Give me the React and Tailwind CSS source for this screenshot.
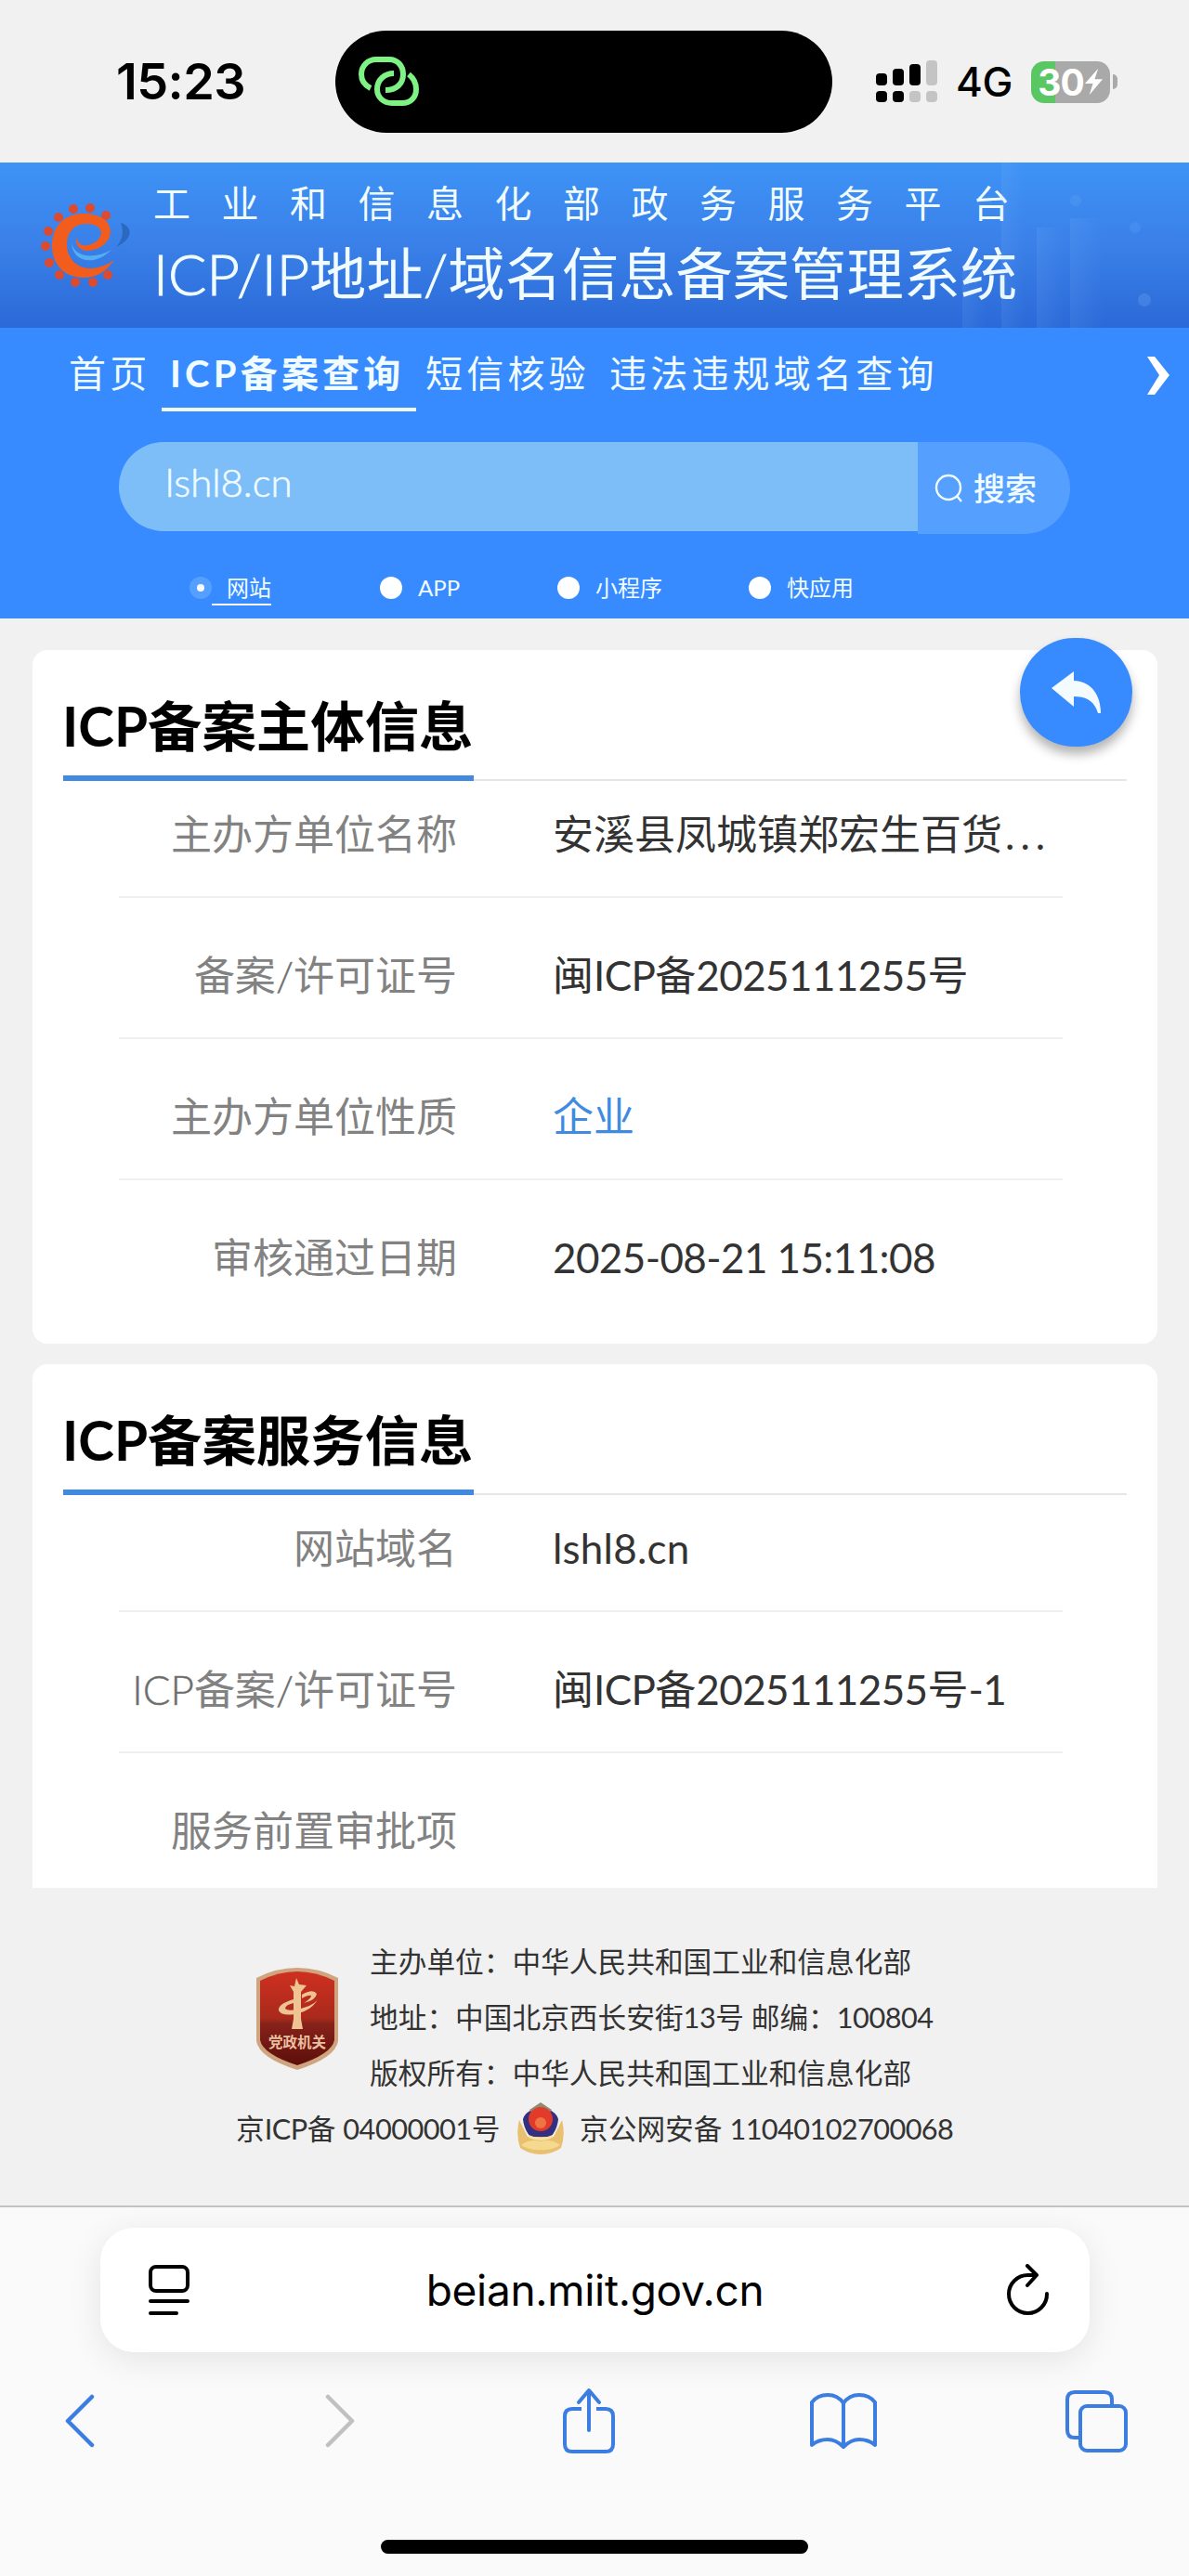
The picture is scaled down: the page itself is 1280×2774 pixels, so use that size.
import clsx from "clsx";

const subjectRows = [
  { label: "主办方单位名称", value: "安溪县凤城镇郑宏生百货..." },
  { label: "备案/许可证号", value: "闽ICP备2025111255号" },
  { label: "主办方单位性质", value: "企业", link: true },
  { label: "审核通过日期", value: "2025-08-21 15:11:08" },
];

const serviceRows = [
  { label: "网站域名", value: "lshl8.cn" },
  { label: "ICP备案/许可证号", value: "闽ICP备2025111255号-1" },
  { label: "服务前置审批项", value: "" },
];

function Mixed({ text, latin }) {
  return text.split(/([\x21-\x7e][\x20-\x7e]*)/).map((part, i) => {
    if (!part) return null;
    if (part === "...") {
      return (
        <span key={i} className="ml-[3px] tracking-[6px]">
          {part}
        </span>
      );
    }
    return i % 2 ? (
      <span key={i} className={latin}>
        {part}
      </span>
    ) : (
      part
    );
  });
}

function StatusBar() {
  return (
    <div className="flex h-[175px] items-start bg-[#f1f1f1] pt-[33px] font-['Inter','Noto_Sans_CJK_SC',sans-serif]">
      <div className="ml-[125px] flex h-[110px] w-[236px] items-center">
        <span className="text-[54px] font-semibold leading-none tracking-[-0.6px] text-black">15:23</span>
      </div>
      <div className="flex h-[110px] w-[535px] items-center rounded-full bg-black pl-[24px]">
        <svg width="70" height="56" viewBox="0 0 70 56" fill="none" stroke="#7ef283" strokeWidth="6">
          <path d="M14 35C8 32 4 27 4 20C4 11 11 4 20 4H34C43 4 49 11 49 20C49 30 42 37 30 37" />
          <path d="M39 19C29 19 21 26 21 36C21 45 28 51 37 51H48C57 51 63 45 63 36C63 29 60 24 55 20" />
        </svg>
      </div>
      <div className="ml-[47px] flex h-[110px] items-center">
        <svg width="66" height="46" viewBox="0 0 66 46">
          <rect x="0" y="14" width="12" height="13" rx="4" />
          <rect x="18" y="9" width="12" height="18" rx="4" />
          <rect x="36" y="4" width="12" height="23" rx="4" />
          <rect x="54" y="0" width="12" height="27" rx="4" fill="#c4c4c4" />
          <rect x="0" y="33" width="12" height="12" rx="4" />
          <rect x="18" y="33" width="12" height="12" rx="4" />
          <rect x="36" y="33" width="12" height="12" rx="4" fill="#c4c4c4" />
          <rect x="54" y="33" width="12" height="12" rx="4" fill="#c4c4c4" />
        </svg>
        <span className="ml-[20px] w-[81px] text-[44px] font-medium leading-none tracking-[-0.5px]">4G</span>
        <div className="flex h-[45px] w-[85px] items-center justify-center overflow-hidden rounded-[14px] bg-[linear-gradient(90deg,#5bc763_0_26px,#a9a9a9_26px)]">
          <span className="text-[39px] font-bold leading-none tracking-[-1px] text-white">30</span>
          <svg width="21" height="32" viewBox="0 0 22 32" fill="#fff">
            <path d="M16 1L1 18H10L6 31L21 13H12Z" />
          </svg>
        </div>
        <div className="ml-[3px] h-[16px] w-[5px] rounded-r-full bg-[#a9a9a9]" />
      </div>
    </div>
  );
}

function MiitLogo() {
  const dots = [
    [78, 37], [61, 29], [43, 30], [27, 39], [16, 54], [13, 70],
    [17, 88], [28, 101], [45, 109], [64, 109], [80, 101],
  ];
  return (
    <svg width="110" height="130" viewBox="0 0 110 130" fill="none">
      <path d="M94 45C107 49 108 62 89 71C97 62 97 54 94 45Z" fill="#2a69be" />
      <path d="M41 66C43 80 62 86 84 74C66 92 42 88 41 66Z" fill="#55aef4" />
      {dots.map(([x, y]) => (
        <circle key={x + "-" + y} cx={x} cy={y} r="5" fill="#dc4a30" />
      ))}
      <path
        d="M87 85C78 98 67 104 54 104C34 104 20 90 20 70C20 50 32 35 54 35C70 35 83 42 83 55C82 67 70 75 57 75C49 74 44 68 47 61C48 68 52 70 58 69C66 68 73 62 73 55C72 49 65 46 57 46C44 46 36 55 36 68C36 84 48 95 63 94C72 93 80 90 87 85Z"
        fill="#f25d1e"
      />
    </svg>
  );
}

function Banner() {
  return (
    <div className="relative flex h-[178px] overflow-hidden bg-linear-to-b from-[#3e93f6] via-[#3a80e8] to-[#2b69d8] text-[#f0fcff]">
      <div className="ml-[36px] mt-[20px] w-[129px]">
        <MiitLogo />
      </div>
      <div className="pt-[16px]">
        <div className="whitespace-nowrap text-[40px] leading-[56px] tracking-[33.5px]">工业和信息化部政务服务平台</div>
        <div className="mt-[7px] whitespace-nowrap text-[61.3px] leading-[80px]">
          <Mixed text="ICP/IP地址/域名信息备案管理系统" latin="font-light [-webkit-text-stroke:1px_#f0fcff]" />
        </div>
      </div>
      {/* faint skyline on the right */}
      <svg className="absolute right-0 top-0" width="260" height="178" viewBox="0 0 260 178" fill="#8fc2ff">
        <defs>
          <linearGradient id="tower" x1="0" y1="0" x2="1" y2="0">
            <stop offset="0" stopColor="#8fc2ff" stopOpacity=".12" />
            <stop offset="1" stopColor="#8fc2ff" stopOpacity="0" />
          </linearGradient>
        </defs>
        <rect x="16" y="110" width="26" height="68" fill="url(#tower)" />
        <rect x="58" y="0" width="26" height="178" fill="url(#tower)" />
        <rect x="96" y="70" width="30" height="108" fill="url(#tower)" />
        <rect x="132" y="60" width="36" height="118" fill="url(#tower)" />
        <circle cx="138" cy="41" r="6" opacity=".12" />
        <circle cx="202" cy="70" r="6" opacity=".12" />
        <circle cx="212" cy="148" r="7" opacity=".2" />
      </svg>
    </div>
  );
}

function Nav() {
  return (
    <div className="flex h-[90px] items-start pl-[74px] pt-[22px] text-[40px] leading-[54px] tracking-[4.2px] text-[#f0fcff]">
      <span className="w-[100px] whitespace-nowrap">首页</span>
      <span className="h-[68px] w-[274px] whitespace-nowrap border-b-4 border-[#f0fcff] pl-[9px] font-bold">ICP备案查询</span>
      <span className="ml-[10px] w-[198px] whitespace-nowrap">短信核验</span>
      <span className="whitespace-nowrap">违法违规域名查询</span>
      <svg className="ml-auto mr-[20px] mt-[8px]" width="26" height="44" viewBox="0 0 26 44" fill="#fff">
        <path d="M1 1H9L25 21L9 42H1L14 21Z" />
      </svg>
    </div>
  );
}

function Search() {
  return (
    <div className="ml-[128px] mt-[33px] flex h-[99px] w-[1024px] text-[#f0fcff]">
      <div className="h-[96px] w-[860px] rounded-l-full bg-[#7dbef9] pl-[50px]">
        <span className="text-[42px] font-light leading-[86px] [-webkit-text-stroke:0.6px_#f0fcff]">lshl8.cn</span>
      </div>
      <div className="flex flex-1 items-center rounded-r-full bg-[#559fff] pl-[18px]">
        <svg width="32" height="32" viewBox="0 0 32 32" fill="none" stroke="currentColor" strokeWidth="2.4">
          <circle cx="15" cy="15" r="13" />
          <path d="M24 24L29 30" />
        </svg>
        <span className="ml-[10px] text-[34px] font-medium leading-none">搜索</span>
      </div>
    </div>
  );
}

function Radio({ label, checked, className }) {
  return (
    <div className={clsx("flex items-start whitespace-nowrap text-[24px] leading-[34px]", className)}>
      {checked ? (
        <span className="mt-[5px] flex size-[24px] items-center justify-center rounded-full bg-[#559fff]">
          <span className="size-[8px] rounded-full bg-white" />
        </span>
      ) : (
        <span className="mt-[5px] size-[24px] rounded-full bg-white" />
      )}
      <span className={clsx("h-[36px]", checked ? "border-b-2 border-white pl-[16px]" : "ml-[17px]")}>{label}</span>
    </div>
  );
}

function Card({ title, rows, className }) {
  return (
    <div className={clsx("mx-[35px] w-[1211px] bg-white px-[33px] pt-[34px]", className)}>
      <div className="flex border-b-2 border-[#e6e6e6]">
        <h2 className="-mb-[2px] h-[107px] w-[442px] whitespace-nowrap border-b-[6px] border-[#4289e0] text-[58.4px] font-bold leading-[95px] text-black">
          <span className="-ml-[1px]">{title}</span>
        </h2>
      </div>
      <div className="ml-[60px] w-[1016px]">
        {rows.map((row, i) => (
          <div
            key={row.label}
            className={clsx(
              "flex whitespace-nowrap text-[44px] leading-[60px]",
              i === 0 ? "h-[126px] pt-[27px]" : "h-[152px] pt-[53px]",
              i < rows.length - 1 && "border-b-2 border-[#efefef]"
            )}
          >
            <span className="w-[364px] text-right text-[#828282]">
              <Mixed text={row.label} latin="font-light text-[#6c6c6c] [-webkit-text-stroke:0.5px_#777]" />
            </span>
            <span className={clsx("ml-[103px]", row.link ? "text-[#3f8be0]" : "text-[#333]")}>
              <Mixed text={row.value} latin={row.value === "lshl8.cn" ? "tracking-[0.2px]" : "tracking-[-0.6px]"} />
            </span>
          </div>
        ))}
      </div>
    </div>
  );
}

function PartyShield() {
  return (
    <svg className="mt-[6px]" width="90" height="112" viewBox="0 0 90 112">
      <defs>
        <linearGradient id="shield" x1="0" y1="0" x2="0" y2="1">
          <stop offset="0" stopColor="#cf3020" />
          <stop offset=".5" stopColor="#a82a1c" />
          <stop offset=".56" stopColor="#86221a" />
          <stop offset="1" stopColor="#5d0e0a" />
        </linearGradient>
      </defs>
      <path d="M1 12Q22 1 45 1Q68 1 89 12V80Q86 98 45 111Q4 98 1 80Z" fill="#cfa57f" />
      <path d="M5 15Q25 5 45 5Q65 5 85 15V79Q82 94 45 106Q8 94 5 79Z" fill="url(#shield)" />
      <path d="M37 20L42 21L44 12L47 19L55 20L49 27V56L51 67H39L41 56V27Z" fill="#f0c392" />
      <path d="M50 30Q62 23 66 29Q65 36 52 39Q60 34 60 31Q57 30 50 34Z" fill="#f0c392" />
      <path d="M41 35Q24 40 25 47Q28 53 42 51Q62 47 68 33Q66 40 52 44Q36 49 32 45Q32 41 41 39Z" fill="#f0c392" />
      <text x="45" y="87" textAnchor="middle" fontSize="15.500" fontWeight="700" fill="#eabf9f" fontFamily="Noto Sans CJK SC, sans-serif">
        党政机关
      </text>
    </svg>
  );
}

function PoliceBadge() {
  return (
    <svg width="52" height="58" viewBox="0 0 52 58">
      <path d="M3 20Q-1 36 4 50Q14 57 26 57Q38 57 48 50Q53 36 49 20L40 38H12Z" fill="#e9c070" />
      <path d="M5 47Q14 40 26 43Q38 40 47 47Q38 53 26 52Q14 53 5 47Z" fill="#f4d98e" />
      <path d="M7 19Q9 12 17 9L26 2L35 9Q43 12 45 19Q44 30 37 38H15Q8 30 7 19Z" fill="#34307f" />
      <path d="M14 9L26 1L38 9L34 14H18Z" fill="#8f8a72" />
      <circle cx="26" cy="19" r="13" fill="#e23b2a" />
      <circle cx="26" cy="23" r="6" fill="#ee7444" />
      <path d="M13 36Q26 42 39 36V39Q26 45 13 39Z" fill="#f6e2a4" />
    </svg>
  );
}

function Footer() {
  return (
    <div className="h-[342px] pt-[50px] text-[30.7px] leading-[60px] text-[#333]">
      <div className="flex pl-[275px]">
        <div className="w-[123px] pt-[29px]">
          <PartyShield />
        </div>
        <div className="whitespace-nowrap">
          <p>主办单位：中华人民共和国工业和信息化部</p>
          <p>
            <Mixed text="地址：中国北京西长安街13号 邮编：100804" latin="tracking-[-0.5px]" />
          </p>
          <p>版权所有：中华人民共和国工业和信息化部</p>
        </div>
      </div>
      <div className="flex items-start whitespace-nowrap pl-[254px]">
        <span className="w-[302px]">
          <Mixed text="京ICP备 04000001号" latin="tracking-[-0.5px]" />
        </span>
        <div className="w-[68px]">
          <PoliceBadge />
        </div>
        <Mixed text="京公网安备 11040102700068" latin="ml-[8px] tracking-[-0.6px]" />
      </div>
    </div>
  );
}

function BrowserBar() {
  return (
    <div className="flex h-[399px] flex-col border-t-2 border-[#c2c2c2] bg-[#fafafa]">
      <div className="ml-[108px] mt-[22px] flex h-[134px] w-[1065px] shrink-0 items-center justify-between rounded-[36px] bg-white pl-[51px] pr-[42px] shadow-[0_8px_36px_rgba(0,0,0,0.09)]">
        <svg width="46" height="56" viewBox="0 0 46 56" fill="none" stroke="#000" strokeWidth="4" strokeLinecap="round">
          <rect x="3" y="3" width="40" height="26" rx="6" />
          <path d="M3 40H43M3 53H31" />
        </svg>
        <span className="mr-[7px] text-[46px] leading-none tracking-[-0.3px] text-black font-['Inter','Noto_Sans_CJK_SC',sans-serif]">beian.miit.gov.cn</span>
        <svg width="48" height="56" viewBox="0 0 48 56" fill="none" stroke="#000" strokeWidth="4" strokeLinecap="round" strokeLinejoin="round">
          <path d="M44 32A20.500 20.500 0 1 1 24 12H32" />
          <path d="M23 2L33 12L23 23" />
        </svg>
      </div>
      <div className="mt-[37px] flex h-[74px] shrink-0 items-center pl-[70px] text-[#3b7de0]">
        <svg width="34" height="58" viewBox="0 0 34 58" fill="none" stroke="currentColor" strokeWidth="4.500" strokeLinecap="round" strokeLinejoin="round">
          <path d="M29 3L3 29L29 55" />
        </svg>
        <svg className="ml-[246px]" width="34" height="58" viewBox="0 0 34 58" fill="none" stroke="#c0c0c0" strokeWidth="4.500" strokeLinecap="round" strokeLinejoin="round">
          <path d="M3 3L29 29L3 55" />
        </svg>
        <svg className="ml-[221px]" width="58" height="72" viewBox="0 0 58 72" fill="none" stroke="currentColor" strokeWidth="4">
          <path d="M21 23H11Q3 23 3 31V61Q3 69 11 69H47Q55 69 55 61V31Q55 23 47 23H37" />
          <path d="M29 46V4M18 16L29 3L40 16" strokeLinecap="round" strokeLinejoin="round" />
        </svg>
        <svg className="ml-[208px]" width="74" height="62" viewBox="0 0 74 62" fill="none" stroke="currentColor" strokeWidth="4" strokeLinejoin="round">
          <path d="M37 12Q31 3 20 3Q9 3 3 11V57Q10 51 20 51Q29 51 37 59Q45 51 54 51Q64 51 71 57V11Q65 3 54 3Q43 3 37 12V59" />
        </svg>
        <svg className="ml-[201px]" width="68" height="68" viewBox="0 0 68 68" fill="none" stroke="currentColor" strokeWidth="4">
          <rect x="17" y="18" width="49" height="48" rx="7" />
          <path d="M17 52H11Q3 52 3 44V11Q3 3 11 3H43Q51 3 51 11V18" />
        </svg>
      </div>
      <div className="ml-[410px] mt-[91px] h-[15px] w-[460px] shrink-0 rounded-full bg-black" />
    </div>
  );
}

export default function App() {
  return (
    <div className="h-[2774px] w-[1280px] overflow-hidden bg-[#f1f1f1] font-['Lato','Noto_Sans_CJK_SC',sans-serif]">
      <StatusBar />
      <Banner />
      <div className="h-[313px] bg-[#388bff] text-[#f0fcff]">
        <Nav />
        <Search />
        <div className="mt-[41px] flex h-[40px]">
          <Radio label="网站" checked className="ml-[204px] w-[205px]" />
          <Radio label="APP" className="w-[191px]" />
          <Radio label="小程序" className="w-[206px]" />
          <Radio label="快应用" />
        </div>
      </div>
      <div className="relative pt-[34px]">
        <Card title="ICP备案主体信息" rows={subjectRows} className="h-[747px] rounded-[16px]" />
        <Card title="ICP备案服务信息" rows={serviceRows} className="mt-[22px] h-[564px] rounded-t-[16px]" />
        {/* floating back button */}
        <button className="absolute left-[1098px] top-[21px] flex h-[117px] w-[121px] items-center justify-center rounded-full bg-[#388bff] shadow-[0_8px_12px_rgba(0,0,0,0.3)]">
          <svg width="54" height="46" viewBox="0 0 54 46" fill="#f4fbff">
            <path d="M0 18L24 0V10C42 11 53 24 53 45H50C46 32 38 27 24 27V38Z" />
          </svg>
        </button>
      </div>
      <Footer />
      <BrowserBar />
    </div>
  );
}
